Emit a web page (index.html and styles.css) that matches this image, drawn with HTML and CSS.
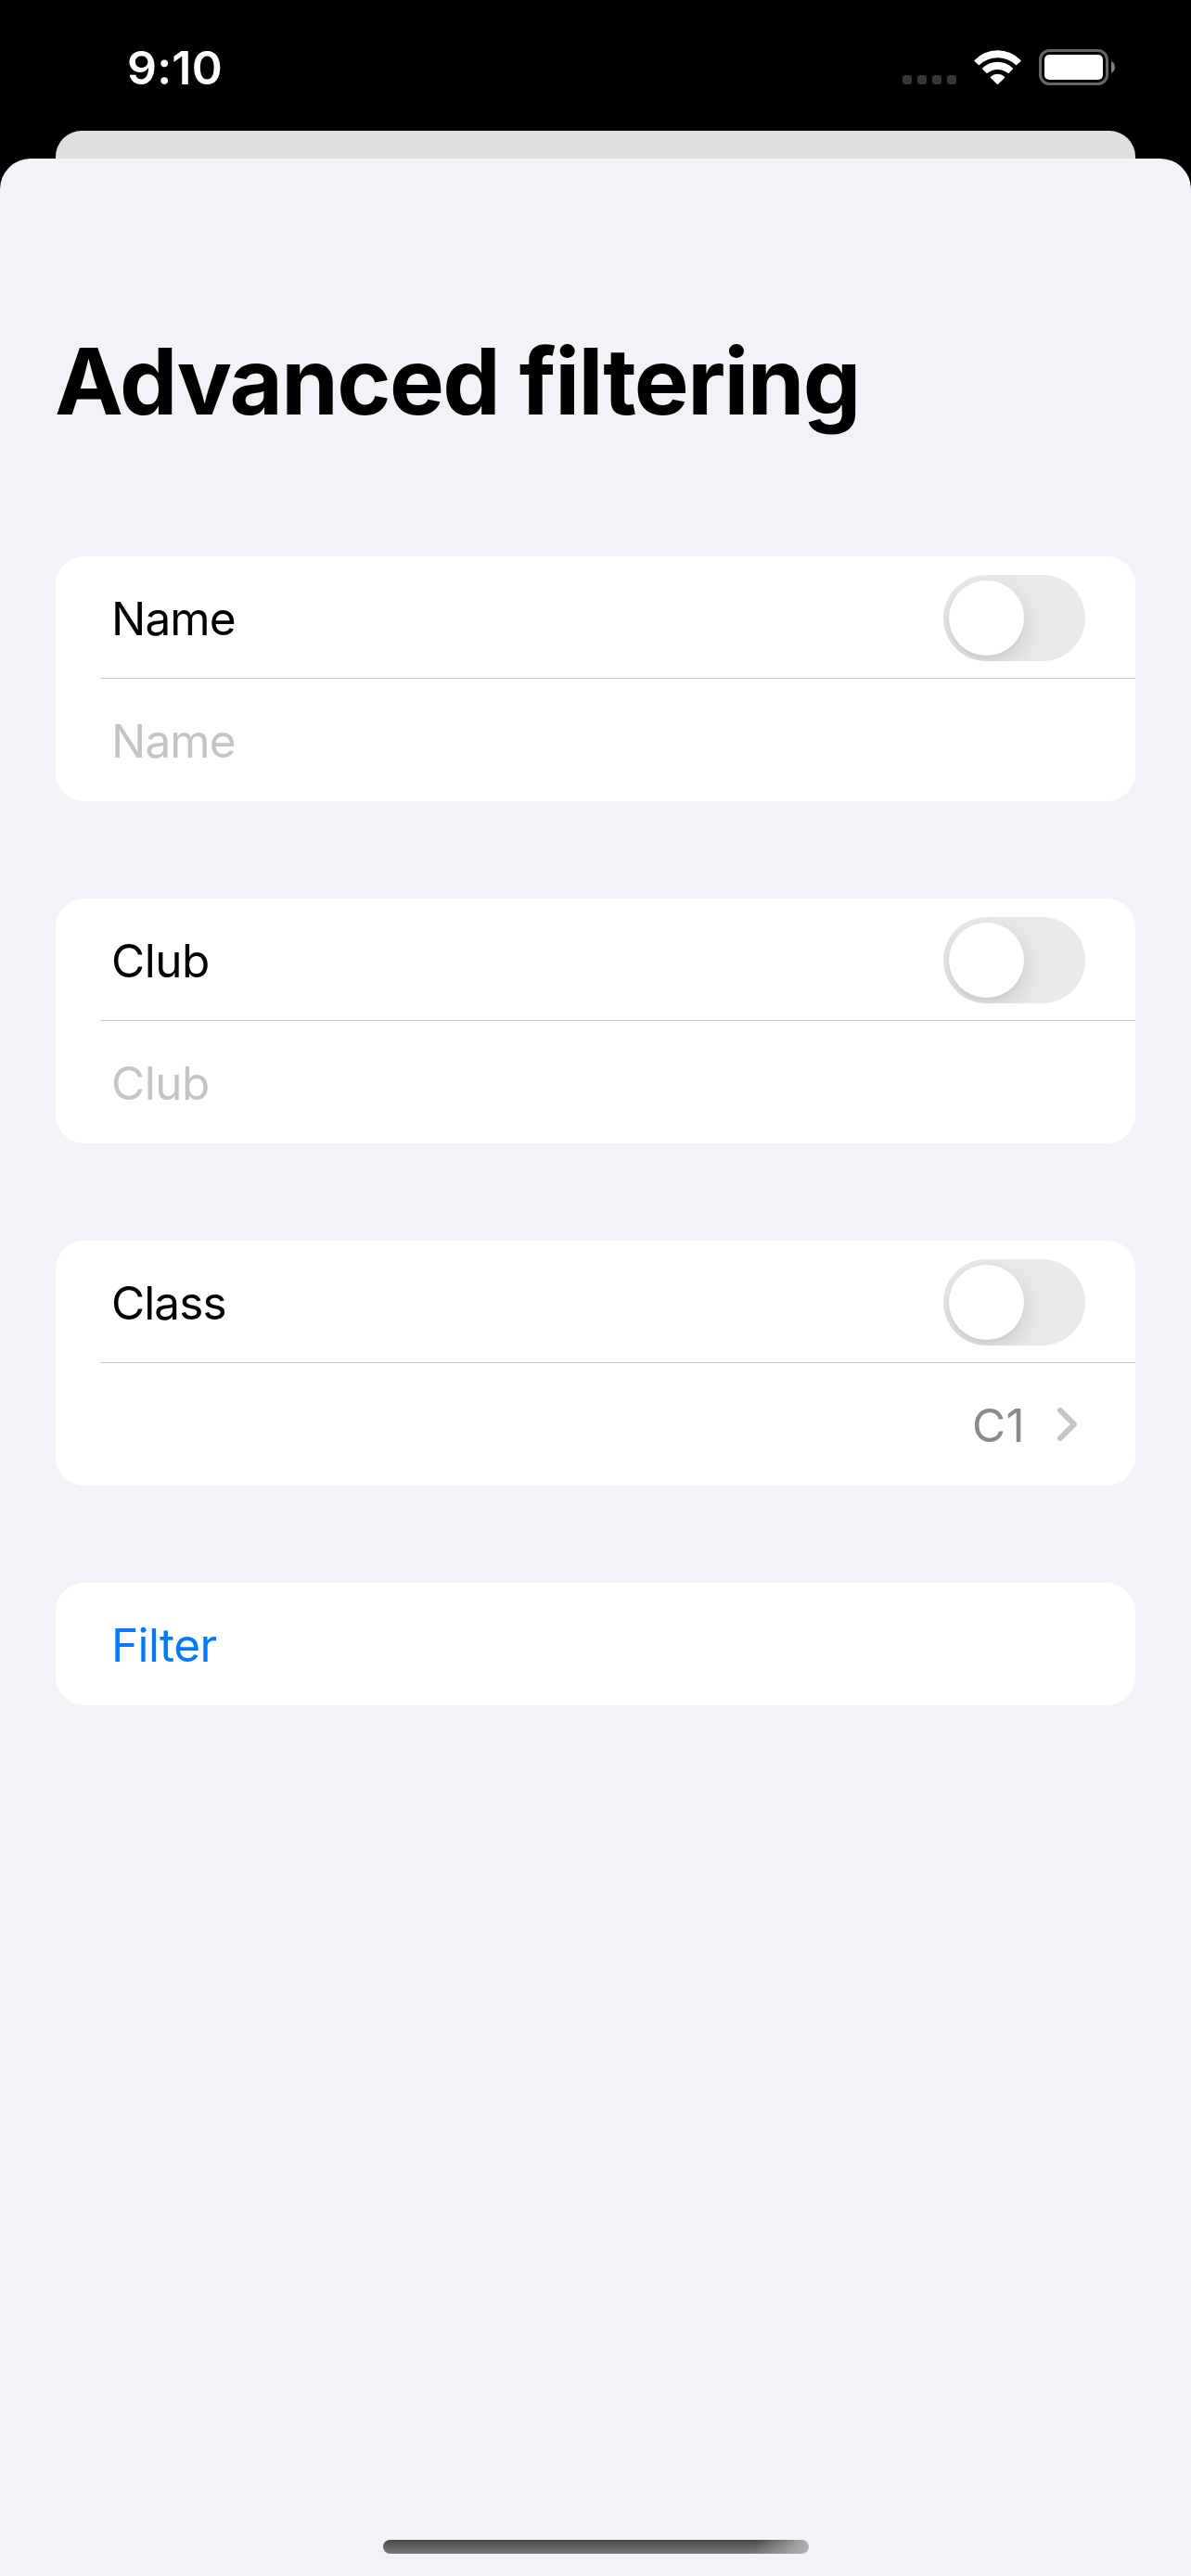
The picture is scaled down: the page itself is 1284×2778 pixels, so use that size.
FILE: index.html
```html
<!DOCTYPE html>
<html lang="en">
<head>
<meta charset="utf-8">
<title>Advanced filtering</title>
<link rel="stylesheet" href="styles.css">
</head>
<body>
<div class="screen">
  <header class="status-bar">
    <span class="time">9:10</span>
    <div class="indicators">
      <div class="signal"><i></i><i></i><i></i><i></i></div>
      <svg class="wifi" viewBox="0 0 51 37" aria-hidden="true">
        <path d="M.5 10.9A34.5 34.5 0 0 1 50.5 10.9Q51 11.4 50.5 11.9L46.1 16Q45.6 16.4 45 15.9A28.7 28.7 0 0 0 6 15.9Q5.4 16.4 4.9 16L.5 11.9Q0 11.4 .5 10.9Z"/>
        <path d="M9.2 19.6A22.8 22.8 0 0 1 41.8 19.6Q42.3 20.2 41.8 20.7L37.6 24.8Q37 25.3 36.4 24.8A17.2 17.2 0 0 0 14.6 24.8Q14 25.3 13.4 24.8L9.2 20.7Q8.7 20.2 9.2 19.6Z"/>
        <path d="M18 28.8A10.8 10.8 0 0 1 33 28.8Q33.5 29.3 33 29.9L26.1 36.7Q25.5 37.2 24.9 36.7L18 29.9Q17.5 29.3 18 28.8Z"/>
      </svg>
      <svg class="battery" viewBox="0 0 82 39" aria-hidden="true">
        <rect class="battery-shell" x="1.5" y="1.5" width="72" height="36" rx="10"/>
        <rect class="battery-level" x="6" y="6" width="63" height="27" rx="5"/>
        <path class="battery-cap" d="M78 13.3Q82 15.2 82 19.5T78 25.7Z"/>
      </svg>
    </div>
  </header>
  <div class="back-card"></div>
  <main class="sheet">
    <h1 class="title">Advanced filtering</h1>
    <form class="groups">
      <section class="group">
        <div class="row"><span>Name</span><span class="toggle"></span></div>
        <div class="row placeholder"><span>Name</span></div>
      </section>
      <section class="group">
        <div class="row club"><span>Club</span><span class="toggle"></span></div>
        <div class="row club placeholder"><span>Club</span></div>
      </section>
      <section class="group">
        <div class="row"><span>Class</span><span class="toggle"></span></div>
        <div class="row picker">
          <span class="value">C1</span>
          <svg class="chevron" viewBox="0 0 21 36" aria-hidden="true"><path d="M3 3 18 18 3 33"/></svg>
        </div>
      </section>
      <section class="group">
        <div class="row action"><span>Filter</span></div>
      </section>
    </form>
    <div class="home-indicator"></div>
  </main>
</div>
</body>
</html>
```

FILE: styles.css
```css
* { box-sizing: border-box; }
body {
  margin: 0;
  background: #000;
  font-family: Inter, "Liberation Sans", sans-serif;
}
.screen {
  display: flex;
  flex-direction: column;
  width: 1284px;
  height: 2778px;
  overflow: hidden;
  background: #000;
}
.status-bar {
  display: flex;
  justify-content: space-between;
  align-items: flex-start;
  height: 141px;
  padding: 53px 82px 0 137px;
  flex: none;
}
.time {
  color: #fff;
  font-size: 50px;
  font-weight: 600;
  line-height: 40px;
  letter-spacing: .2px;
}
.indicators { display: flex; align-items: flex-start; }
.signal { display: flex; gap: 6px; margin: 28px 19px 0 0; }
.signal i { width: 10px; height: 10px; border-radius: 3px; background: #363636; }
.wifi { width: 51px; height: 37px; margin: 1px 19px 0 0; fill: #fff; }
.battery { width: 82px; height: 39px; }
.battery-shell { fill: none; stroke: #666; stroke-width: 3; }
.battery-level { fill: #fff; }
.battery-cap { fill: #808080; }
.back-card {
  flex: none;
  height: 30px;
  margin: 0 60px;
  border-radius: 28px 28px 0 0;
  background: #dfdfdf;
}
.sheet {
  flex: 1;
  display: flex;
  flex-direction: column;
  padding: 180px 60px 24px;
  border-radius: 33px 33px 0 0;
  background: #f2f2f7;
}
.title {
  margin: 0 0 129px -1px;
  font-size: 99px;
  font-weight: 700;
  line-height: 120px;
  letter-spacing: -1.65px;
  white-space: nowrap;
}
.groups { display: flex; flex-direction: column; gap: 105px; }
.group { border-radius: 31px; background: #fff; }
.row {
  display: flex;
  align-items: center;
  justify-content: space-between;
  height: 132px;
  padding: 0 54px 0 60px;
  font-size: 49.5px;
  letter-spacing: -.9px;
}
.row > span:first-child { padding-top: 1px; }
.club { letter-spacing: -.5px; }
.row:not(:last-child) {
  background: linear-gradient(#c6c6c8, #c6c6c8) 48px 100% / 100% 1px no-repeat;
}
.placeholder { color: #c4c4c6; }
.picker { justify-content: flex-end; gap: 35px; padding-right: 63px; letter-spacing: .4px; }
.value { color: #8a8a8e; }
.chevron { width: 21px; height: 36px; fill: none; stroke: #c4c4c6; stroke-width: 6; stroke-linecap: round; stroke-linejoin: round; }
.action { color: #007aff; letter-spacing: -.6px; }
.toggle {
  width: 153px;
  height: 93px;
  padding: 6px;
  border-radius: 47px;
  background: #e9e9ea;
  overflow: hidden;
}
.toggle::before {
  content: "";
  display: block;
  width: 81px;
  height: 81px;
  border-radius: 50%;
  background: #fff;
  box-shadow: 0 9px 24px rgba(0, 0, 0, .13), 0 3px 3px rgba(0, 0, 0, .03);
}
.home-indicator {
  width: 459px;
  height: 15px;
  margin: auto auto 0 353px;
  border-radius: 8px;
  background:
    linear-gradient(110deg, transparent 87%, #b0b0b2 99%),
    linear-gradient(#4a4a4a, #7a797d);
}
```
